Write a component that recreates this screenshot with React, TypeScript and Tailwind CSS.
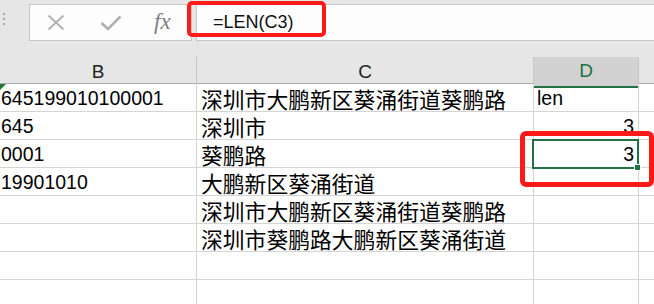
import React from 'react';

const cellFont = { fontFamily: '"Liberation Sans", "Noto Sans CJK SC", sans-serif' };
const cjkFont = { fontFamily: '"Noto Sans CJK SC", "Liberation Sans", sans-serif' };

const rows: [string, string, string, 'left' | 'right'][] = [
  ['645199010100001', '深圳市大鹏新区葵涌街道葵鹏路', 'len', 'left'],
  ['645', '深圳市', '3', 'right'],
  ['0001', '葵鹏路', '3', 'right'],
  ['19901010', '大鹏新区葵涌街道', '', 'left'],
  ['', '深圳市大鹏新区葵涌街道葵鹏路', '', 'left'],
  ['', '深圳市葵鹏路大鹏新区葵涌街道', '', 'left'],
  ['', '', '', 'left'],
  ['', '', '', 'left'],
];

const FormulaBar: React.FC = () => (
  <div className="relative h-[57px] bg-[#e6e6e6]">
    <div className="absolute left-[3px] top-[13px] flex flex-col gap-[3px]">
      <span className="w-[2px] h-[2px] bg-[#a6a6a6]" />
      <span className="w-[2px] h-[2px] bg-[#a6a6a6]" />
      <span className="w-[2px] h-[2px] bg-[#a6a6a6]" />
    </div>
    <div className="absolute left-[29px] top-[4px] w-[163px] h-[37px] bg-[#fdfdfd] border border-[#c6c6c6] flex items-center">
      <svg className="ml-[16px]" width="20" height="17" viewBox="0 0 20 17">
        <path d="M2.5 1.5 L17.5 15.5 M17.5 1.5 L2.5 15.5" stroke="#b0b0b0" strokeWidth="1.8" fill="none" />
      </svg>
      <svg className="ml-[34px]" width="22" height="16" viewBox="0 0 22 16">
        <path d="M1.5 8 L8 14 L20.5 1.5" stroke="#b0b0b0" strokeWidth="2.6" fill="none" />
      </svg>
      <span
        className="ml-[32px] text-[23px] italic text-[#808080] leading-none -mt-[2px]"
        style={{ fontFamily: '"Liberation Serif", serif' }}
      >
        fx
      </span>
    </div>
    <div className="absolute left-[196px] right-0 top-[4px] h-[37px] bg-[#fdfdfd] border-y border-l border-[#c6c6c6] flex items-center">
      <span className="ml-[16px] text-[18px] text-[#111]" style={cellFont}>
        =LEN(C3)
      </span>
    </div>
    <div className="absolute left-[187px] top-[1px] w-[139px] h-[36px] border-[4px] border-[#ff1a1a] rounded-[5px]" />
  </div>
);

const HeaderRow: React.FC = () => (
  <div className="grid grid-cols-[197px_337px_105px_1fr] h-[27px] bg-[#e6e6e6] border-b border-[#ababab]" style={cellFont}>
    <div className="border-r border-[#c6c6c6] flex items-center justify-center text-[19px] text-[#222]">B</div>
    <div className="border-r border-[#c6c6c6] flex items-center justify-center text-[19px] text-[#222]">C</div>
    <div className="border-r border-[#c6c6c6] bg-[#d2d2d2] border-b-2 border-b-[#217346] flex items-center justify-center text-[19px] text-[#217346]">D</div>
    <div />
  </div>
);

export default function App() {
  return (
    <div className="w-[654px] h-[304px] overflow-hidden bg-white">
      <FormulaBar />
      <HeaderRow />
      <div className="relative">
        {rows.map((r, i) => (
          <div
            key={i}
            className="grid grid-cols-[197px_337px_105px_1fr] h-[28px] text-black"
            style={cellFont}
          >
            <div className="border-r border-b border-[#d4d4d4] flex items-end pl-[1px] text-[19.5px] leading-none whitespace-nowrap">
              <span className="pb-[3px]">{r[0]}</span>
            </div>
            <div
              className="border-r border-b border-[#d4d4d4] flex items-end pl-[4px] text-[21.8px] leading-none whitespace-nowrap"
              style={cjkFont}
            >
              <span className="pb-[1px]">{r[1]}</span>
            </div>
            <div
              className={`border-r border-b border-[#d4d4d4] flex items-end text-[19.5px] leading-none whitespace-nowrap ${
                r[3] === 'right' ? 'justify-end pr-[4px]' : 'pl-[3px]'
              }`}
            >
              <span className="pb-[3px]">{r[2]}</span>
            </div>
            <div className="border-b border-[#d4d4d4]" />
          </div>
        ))}
        <div className="absolute left-[0px] top-[0px] w-0 h-0 border-t-[6px] border-r-[6px] border-t-[#1f7a2f] border-r-transparent" />
        <div className="absolute left-[532px] top-[55px] w-[107px] h-[30px] border-2 border-[#217346]" />
        <div className="absolute left-[634px] top-[80px] w-[7px] h-[7px] bg-[#217346] border border-white" />
        <div className="absolute left-[520px] top-[47px] w-[134px] h-[56px] border-[5px] border-[#ff1a1a] rounded-[6px]" />
      </div>
    </div>
  );
}
